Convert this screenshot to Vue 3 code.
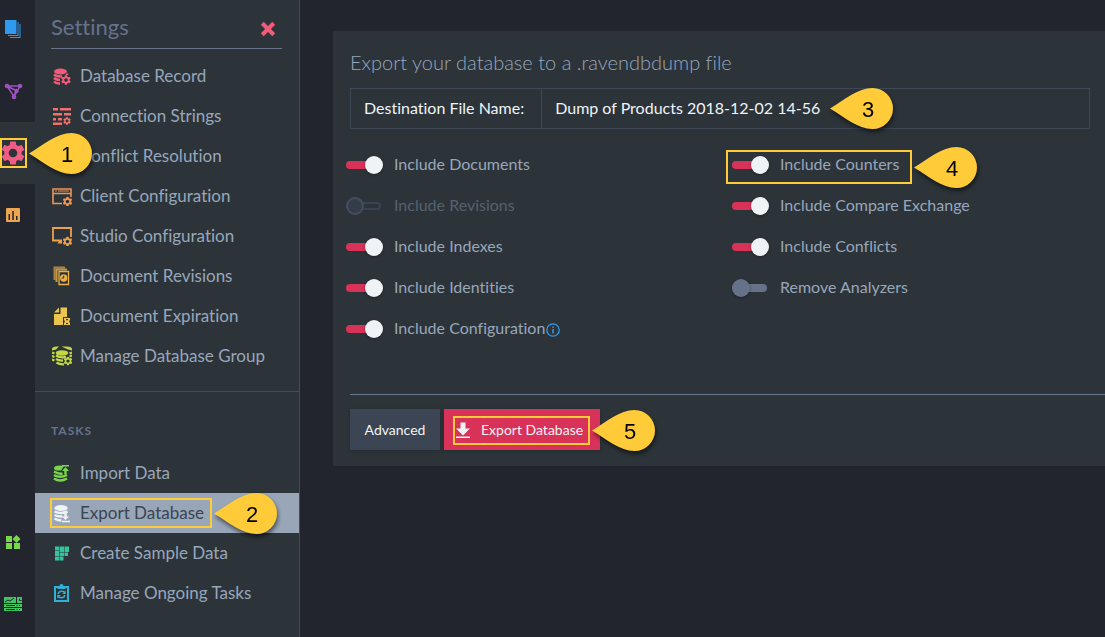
<script setup>
import { ref, h } from 'vue'

const railTop = [
  { icon: 'documents', label: 'Documents', color: '#2f9bf0' },
  { icon: 'indexes', label: 'Indexes', color: '#9b52c0' },
  { icon: 'gear', label: 'Settings', color: '#f25c82', active: true, step: 1 },
  { icon: 'stats', label: 'Stats', color: '#eca550' }
]
const railBottom = [
  { icon: 'resources', label: 'Manage Server', color: '#79d64b' },
  { icon: 'dashboard', label: 'Server Dashboard', color: '#43c463' }
]

const settings = [
  { icon: 'db-gear', label: 'Database Record', color: '#f25c7a' },
  { icon: 'strings', label: 'Connection Strings', color: '#f0706a' },
  { icon: 'conflict', label: 'Conflict Resolution', color: '#f0806a' },
  { icon: 'client', label: 'Client Configuration', color: '#ee9455' },
  { icon: 'studio', label: 'Studio Configuration', color: '#eea04f' },
  { icon: 'revisions', label: 'Document Revisions', color: '#ecb04a' },
  { icon: 'expiration', label: 'Document Expiration', color: '#ebc64a' },
  { icon: 'group', label: 'Manage Database Group', color: '#c3d645' }
]
const tasks = [
  { icon: 'import', label: 'Import Data', color: '#79d64b' },
  { icon: 'export', label: 'Export Database', color: '#f0f3f6', active: true, step: 2 },
  { icon: 'sample', label: 'Create Sample Data', color: '#35c49a' },
  { icon: 'ongoing', label: 'Manage Ongoing Tasks', color: '#2fb0d8' }
]

const fileName = ref('Dump of Products 2018-12-02 14-56')
const columns = ref([
  [
    { id: 'documents', label: 'Include Documents', on: true },
    { id: 'revisions', label: 'Include Revisions', on: false, disabled: true },
    { id: 'indexes', label: 'Include Indexes', on: true },
    { id: 'identities', label: 'Include Identities', on: true },
    { id: 'configuration', label: 'Include Configuration', on: true, info: true }
  ],
  [
    { id: 'counters', label: 'Include Counters', on: true, step: 4 },
    { id: 'compare', label: 'Include Compare Exchange', on: true },
    { id: 'conflicts', label: 'Include Conflicts', on: true },
    { id: 'analyzers', label: 'Remove Analyzers', on: false }
  ]
])

// Numbered drop whose tip points left.
const Callout = (props) =>
  h('svg', { viewBox: '0 0 63 41', width: 63, height: 41, overflow: 'visible' }, [
    h('path', {
      d: 'M0 20.5C14 12 28 0 42.5 0A20.5 20.5 0 0 1 42.5 41C28 41 14 29 0 20.5Z',
      fill: '#ffcb38'
    }),
    h('text', { x: 38, y: 28.5, 'text-anchor': 'middle', 'font-size': 22, fill: '#000' }, String(props.n))
  ])
Callout.props = ['n']
</script>

<template>
  <div class="app">
    <svg class="sprite" aria-hidden="true">
      <symbol id="gear" viewBox="2 2 20 20">
        <path d="M19.14 12.94c.04-.3.06-.61.06-.94 0-.32-.02-.64-.07-.94l2.03-1.58c.18-.14.23-.41.12-.61l-1.92-3.32c-.12-.22-.37-.29-.59-.22l-2.39.96c-.5-.38-1.03-.7-1.62-.94l-.36-2.54c-.04-.24-.24-.41-.48-.41h-3.84c-.24 0-.43.17-.47.41l-.36 2.54c-.59.24-1.13.57-1.62.94l-2.39-.96c-.22-.08-.47 0-.59.22L2.74 8.87c-.12.21-.08.47.12.61l2.03 1.58c-.05.3-.09.63-.09.94s.02.64.07.94l-2.03 1.58c-.18.14-.23.41-.12.61l1.92 3.32c.12.22.37.29.59.22l2.39-.96c.5.38 1.03.7 1.62.94l.36 2.54c.05.24.24.41.48.41h3.84c.24 0 .44-.17.47-.41l.36-2.54c.59-.24 1.13-.56 1.62-.94l2.39.96c.22.08.47 0 .59-.22l1.92-3.32c.12-.22.07-.47-.12-.61l-2.01-1.58zM12 15.6c-1.98 0-3.6-1.62-3.6-3.6s1.62-3.6 3.6-3.6 3.6 1.62 3.6 3.6-1.62 3.6-3.6 3.6z" />
      </symbol>
      <symbol id="documents" viewBox="0 1 20 20">
        <path d="M2 1h11.500v14H2zM14.500 3v13H5v1h10.500V3zM16.500 5v13H7v1h10.500V5z" />
      </symbol>
      <symbol id="indexes" viewBox="0 0 20 20">
        <path d="M4 5L11 15.500L17 5Z M4 5L13 9.500L11 15.500" fill="none" stroke="currentColor" stroke-width="1.500" />
        <circle cx="4" cy="5" r="2.300" /><circle cx="17" cy="5" r="2.300" /><circle cx="13.500" cy="10" r="2.200" /><circle cx="11" cy="16" r="2.300" />
      </symbol>
      <symbol id="stats" viewBox="0 0 20 20">
        <path fill-rule="evenodd" d="M4 3h12a1 1 0 0 1 1 1v12a1 1 0 0 1-1 1H4a1 1 0 0 1-1-1V4a1 1 0 0 1 1-1zM5.500 9v6H7V9zM9.300 6v9h1.500V6zM13 11v4h1.500v-4z" />
      </symbol>
      <symbol id="resources" viewBox="0 0 20 20">
        <path d="M3 4h6v6H3zM3 11h6v6H3zM11 11h6v6h-6zM13.500 3l4 4-4 4-4-4z" />
      </symbol>
      <symbol id="dashboard" viewBox="0 0 20 20">
        <path fill-rule="evenodd" d="M1 3h12v6H1zM14 3h5v6h-5zM1 10h18v3H1zM1 14h18v3H1zM13.500 11v1h1v-1zM16 11v1h1v-1zM13.500 15v1h1v-1zM16 15v1h1v-1zM3 11v1h9v-1zM3 15v1h9v-1z" />
        <path d="M2 8l3-2 2 1 4-3M16.500 4.500v2h2" fill="none" stroke="#22252d" />
      </symbol>
      <symbol id="db-gear" viewBox="0 0 20 20">
        <ellipse cx="8.500" cy="5.500" rx="6.500" ry="3" />
        <path d="M2 8.500q2.500 2.500 8 2M2 12q2 2 6 2M2 15.500q2 2.200 6 2M15 7.500V9" fill="none" stroke="currentColor" stroke-width="2.500" />
        <use href="#gear" x="9" y="9" width="10" height="10" />
      </symbol>
      <symbol id="strings" viewBox="0 0 20 20">
        <path d="M1 2h5v2.500H1zM8 2h11v2.500H8zM1 7h9v2.500H1zM12 7h7v2.500h-7zM1 12h3v2.500H1zM6 12h4v2.500H6zM1 16.500h9V19H1z" />
        <use href="#gear" x="11" y="11" width="8" height="8" />
      </symbol>
      <symbol id="conflict" viewBox="0 0 20 20">
        <path d="M3 2h8v7H3zM3 11h6v7H3z" /><use href="#gear" x="10" y="10" width="9" height="9" />
      </symbol>
      <symbol id="client" viewBox="0 0 20 20">
        <path d="M10 17.500H1V3h18v8M1 7.500h18" fill="none" stroke="currentColor" stroke-width="1.600" />
        <path d="M3 5h2M6 5h11" fill="none" stroke="currentColor" />
        <use href="#gear" x="10.500" y="10.500" width="10" height="10" />
      </symbol>
      <symbol id="studio" viewBox="0 0 20 20">
        <path d="M10 14.500H1V2h18v9" fill="none" stroke="currentColor" stroke-width="1.800" />
        <path d="M7 15h3v2.500H5.500z" />
        <use href="#gear" x="10.500" y="10.500" width="10" height="10" />
      </symbol>
      <symbol id="revisions" viewBox="0 0 20 20">
        <g fill="none" stroke="currentColor"><path d="M2.500 14V1.500H13" opacity=".65" stroke-width="2" /><path d="M4.500 16V3.500H15" opacity=".8" stroke-width="2" /><path d="M7 5.500h9.500v13H7z" stroke-width="1.300" /></g>
        <circle cx="11.700" cy="12" r="3.700" /><path d="M11.700 9.500V12H9.500" fill="none" stroke="#2c3339" />
      </symbol>
      <symbol id="expiration" viewBox="0 0 20 20">
        <path d="M8.500 1.500H15V11h-4v8H2V8h6.500zM7 1.500V6.500H2z" />
        <path fill-rule="evenodd" d="M12 12h6v2l-1 1.500 1 1.500v2h-6v-2l1-1.500-1-1.500zM14 13v1.200h2V13zM14 17v1h2v-1z" />
      </symbol>
      <symbol id="group" viewBox="0 0 20 20">
        <path d="M0 3q0-2.500 5-2.500h2L4 3.500 0 4.500zM20 3q0-2.500-5-2.500H9.500L16 3.500l4 1z" />
        <ellipse cx="10" cy="7" rx="6.300" ry="2.700" />
        <path d="M4 9.500q4 2.500 10 1.500M4 13q3 1.800 7 1.500M4.500 16.500q3 2 7.500 1.800M0 6.500l2.500 1M0 10l2.500 1M0 13.500l2.500 1M20 6.500l-2.500 1M20 9.500l-2.500 1" fill="none" stroke="currentColor" stroke-width="2.300" />
        <use href="#gear" x="11.500" y="10.500" width="9" height="9" />
      </symbol>
      <symbol id="import" viewBox="0 0 20 20">
        <path d="M2 5q0-2.500 6-2.500L12 3 9 7.500H5Q2 7 2 5z" />
        <path d="M2 8.500q5 3 8.500 2M2 12q6 3.500 13 0M2 15.500q6 4 13 0" fill="none" stroke="currentColor" stroke-width="2.500" />
        <path d="M10 2h7v1.500h-7zM13.500 4l3.500 4h-2.300v3.500h-2.400V8H10z" />
      </symbol>
      <symbol id="export" viewBox="0 0 20 20">
        <ellipse cx="9" cy="5" rx="6.800" ry="3" />
        <path d="M2.500 8.500q6 3 13 0M2.500 12q3 1.800 8 1.500M2.500 15.500q3 2 7 2" fill="none" stroke="currentColor" stroke-width="2.500" />
        <path d="M12.300 9h2.500v4.500H17L13.500 17 10 13.500h2.300zM10 17.800h8v1.400h-8z" />
      </symbol>
      <symbol id="sample" viewBox="0 0 20 20">
        <path d="M3 3.500h4v4H3zM7.500 3.500H12V9.500H7.500zM12.500 3.500H17V9h-4.500zM3 8h4v5H3zM7.500 10H12v3H7.500zM12.500 9.500H16V13h-3.500zM3 13.500h4v4H3zM7.500 13.500H11.500v4h-4z" />
      </symbol>
      <symbol id="ongoing" viewBox="0 0 20 20">
        <path d="M3 4h13v14H3z" fill="none" stroke="currentColor" stroke-width="2" />
        <path d="M5.500 3h2a2 2 0 0 1 4 0h2v3h-8z" />
        <path d="M6 11q1-3 4-2.800 2 .2 2.800 1.500M13 12q-1 3-4 2.800-2-.2-2.800-1.500" fill="none" stroke="currentColor" stroke-width="1.500" />
        <path d="M13.700 7.500v3.500h-3.500zM5.300 15.500V12h3.500z" />
      </symbol>
      <symbol id="download" viewBox="0 0 20 20">
        <path d="M7.500 2.500h5v6H17l-7 7-7-7h4.500zM3 16.500h14V18H3z" />
      </symbol>
    </svg>

    <nav class="rail" aria-label="Main">
      <a v-for="r in railTop" :key="r.icon" href="#" class="rail-item" :class="{ active: r.active }" :aria-label="r.label">
        <svg class="icon" :class="{ large: r.active }" :style="{ color: r.color }"><use :href="'#' + r.icon" /></svg>
        <template v-if="r.step"><span class="frame frame-rail"></span><Callout class="callout callout-rail" :n="r.step" /></template>
      </a>
      <span class="spacer"></span>
      <a v-for="r in railBottom" :key="r.icon" href="#" class="rail-item" :aria-label="r.label">
        <svg class="icon" :style="{ color: r.color }"><use :href="'#' + r.icon" /></svg>
      </a>
    </nav>

    <aside class="menu">
      <header class="menu-head">
        <h2>Settings</h2>
        <button type="button" class="close" aria-label="Close">
          <svg viewBox="0 0 14 14" width="16" height="16"><path d="M2 2l10 10M12 2L2 12" stroke="currentColor" stroke-width="3.500" /></svg>
        </button>
      </header>
      <nav aria-label="Settings">
        <a v-for="s in settings" :key="s.icon" href="#" class="item">
          <svg class="icon" :style="{ color: s.color }"><use :href="'#' + s.icon" /></svg><span>{{ s.label }}</span>
        </a>
      </nav>
      <section class="tasks">
        <h3>TASKS</h3>
        <a v-for="t in tasks" :key="t.icon" href="#" class="item" :class="{ active: t.active }">
          <span class="mark">
            <svg class="icon" :style="{ color: t.color }"><use :href="'#' + t.icon" /></svg><span>{{ t.label }}</span>
            <template v-if="t.step"><span class="frame frame-item"></span><Callout class="callout callout-item" :n="t.step" /></template>
          </span>
        </a>
      </section>
    </aside>

    <main class="content">
      <form class="panel" @submit.prevent>
        <h1>Export your database to a .ravendbdump file</h1>
        <div class="field">
          <label for="file-name">Destination File Name:</label>
          <div class="field-value">
            <input id="file-name" v-model="fileName" type="text" />
            <Callout class="callout callout-field" :n="3" />
          </div>
        </div>
        <div class="options">
          <div v-for="(column, i) in columns" :key="i">
            <div v-for="o in column" :key="o.id" class="option">
              <span class="mark">
                <input :id="o.id" v-model="o.on" type="checkbox" :disabled="o.disabled" />
                <label :for="o.id">{{ o.label }}</label>
                <svg v-if="o.info" class="info" viewBox="0 0 14 14" width="14" height="14">
                  <circle cx="7" cy="7" r="6.200" fill="none" stroke="currentColor" stroke-width="1.300" />
                  <path d="M6.300 3.500h1.500V5H6.300zM6.300 6h1.500v4.500H6.300z" />
                </svg>
                <template v-if="o.step"><span class="frame frame-option"></span><Callout class="callout callout-option" :n="o.step" /></template>
              </span>
            </div>
          </div>
        </div>
        <footer class="actions">
          <button type="button" class="btn">Advanced</button>
          <button type="submit" class="btn primary">
            <svg class="icon"><use href="#download" /></svg>Export Database
            <span class="frame frame-btn"></span><Callout class="callout callout-btn" :n="5" />
          </button>
        </footer>
      </form>
    </main>
  </div>
</template>

<style>
body { background: #22252d; }
</style>

<style scoped>
.app {
  display: flex;
  min-height: 100vh;
  background: #22252d;
  color: #98a6ba;
  font: 17px/24px Lato, "Liberation Sans", sans-serif;
  font-variant-ligatures: none;
  overflow: hidden;
}
*, *::before, *::after { box-sizing: border-box; }
.sprite { position: absolute; width: 0; height: 0; }
h1, h2, h3 { margin: 0; }
a { color: inherit; text-decoration: none; }
button, input { font: inherit; color: inherit; }
.icon { width: 20px; height: 20px; flex: none; fill: currentColor; overflow: visible; }
.icon.large { width: 24px; height: 24px; }

.rail { display: flex; flex-direction: column; flex: none; width: 35px; padding-bottom: 2px; }
.rail-item {
  position: relative;
  display: flex;
  align-items: center;
  justify-content: center;
  height: 62px;
  padding-right: 9px;
}
.rail-item:first-child { height: 60px; }
.rail-item.active { background: #2c343a; }
.spacer { flex: 1; }

.menu { flex: none; width: 265px; background: #2c343a; border-right: 1px solid #414d5c; }
.menu-head {
  display: flex;
  align-items: center;
  justify-content: space-between;
  height: 49px;
  margin: 0 17px 7px 16px;
  padding: 10px 6px 0 0;
  border-bottom: 1px solid #66728e;
}
h2 { padding-bottom: 4px; color: #66728e; font-size: 22px; font-weight: 400; }
.close { display: flex; padding: 0; border: 0; background: none; color: #f25c7a; }
.item { display: flex; align-items: center; height: 40px; padding-left: 17px; gap: 8px; }
.item.active { background: #98a6b7; color: #3b4554; }
.mark { position: relative; display: flex; align-items: center; gap: 8px; }
.tasks { margin-top: 15px; padding-top: 29px; border-top: 1px solid #414d5c; }
h3 { margin: 0 0 12px 16px; color: #66728e; font-size: 12px; line-height: 20px; font-weight: 700; letter-spacing: 1px; }

.content { flex: 1; min-width: 0; padding: 31px 0 0 33px; }
.panel { padding: 18px 0 16px 17px; background: #2c343a; }
h1 { font-size: 20px; line-height: 26px; font-weight: 300; }
.field { display: flex; height: 41px; margin: 13px 15px 15px 0; border: 1px solid #3d4857; color: #f0f3f6; font-size: 16px; }
.field label { display: flex; align-items: center; padding: 0 17px 2px 13px; border-right: 1px solid #3d4857; }
.field-value { position: relative; display: flex; flex: 1; }
.field input { width: 100%; padding: 0 13px 2px; border: 0; outline: 0; background: none; }

.options { display: grid; grid-template-columns: 386px 1fr; margin-left: -4px; padding-bottom: 45px; font-size: 16px; }
.option { display: flex; align-items: center; height: 41px; }
.option .mark { gap: 0; }
.option label { padding: 0 0 2px 11px; }
.option input {
  position: relative;
  appearance: none;
  width: 37px;
  height: 18px;
  margin: 0;
}
.option input::before {
  content: "";
  position: absolute;
  inset: 5px 2px 5px 0;
  border-radius: 4px;
  background: #66728a;
}
.option input::after {
  content: "";
  position: absolute;
  left: 0;
  top: 0;
  width: 18px;
  height: 18px;
  border-radius: 50%;
  background: #66728a;
  box-shadow: 0 1px 3px #0005;
}
.option input:checked::before { background: #d93259; }
.option input:checked::after { left: 19px; background: #f0f3f6; }
.option input:disabled::before { background: none; border: 2px solid #384350; }
.option input:disabled::after { background: #343c49; border: 2px solid #434e5e; box-shadow: none; }
.option input:disabled + label { color: #56616d; }
.info { color: #2f9bf0; fill: currentColor; margin: 2px 0 0 1px; }

.actions { display: flex; gap: 4px; padding-top: 14px; border-top: 1px solid #66788e; }
.btn {
  position: relative;
  display: flex;
  align-items: center;
  justify-content: center;
  min-width: 90px;
  height: 41px;
  padding: 0 14px;
  border: 0;
  background: #3b4554;
  color: #f0f3f6;
  font-size: 14px;
  box-shadow: 0 1px 4px #0003;
}
.primary { gap: 8px; padding: 0 17px 0 9px; background: #d93259; }

.frame { position: absolute; border: 2px solid #ffcb38; pointer-events: none; }
.callout {
  position: absolute;
  z-index: 2;
  font-family: "Liberation Sans", sans-serif;
  filter: drop-shadow(1px 3px 2px #0008);
  pointer-events: none;
}
.frame-rail { left: 0; top: 16px; width: 27px; height: 30px; }
.callout-rail { left: 29px; top: 11px; }
.frame-item { inset: -3px -8px -3px -2px; }
.callout-item { left: 100%; top: -8px; margin-left: 10px; }
.callout-field { left: 288px; top: -1px; }
.frame-option { inset: -2px -13px -6px -6px; }
.callout-option { left: 100%; top: -5px; margin-left: 15px; }
.frame-btn { inset: 7px 10px 5px 9px; }
.callout-btn { left: 100%; top: 1px; margin-left: -8px; }
</style>
